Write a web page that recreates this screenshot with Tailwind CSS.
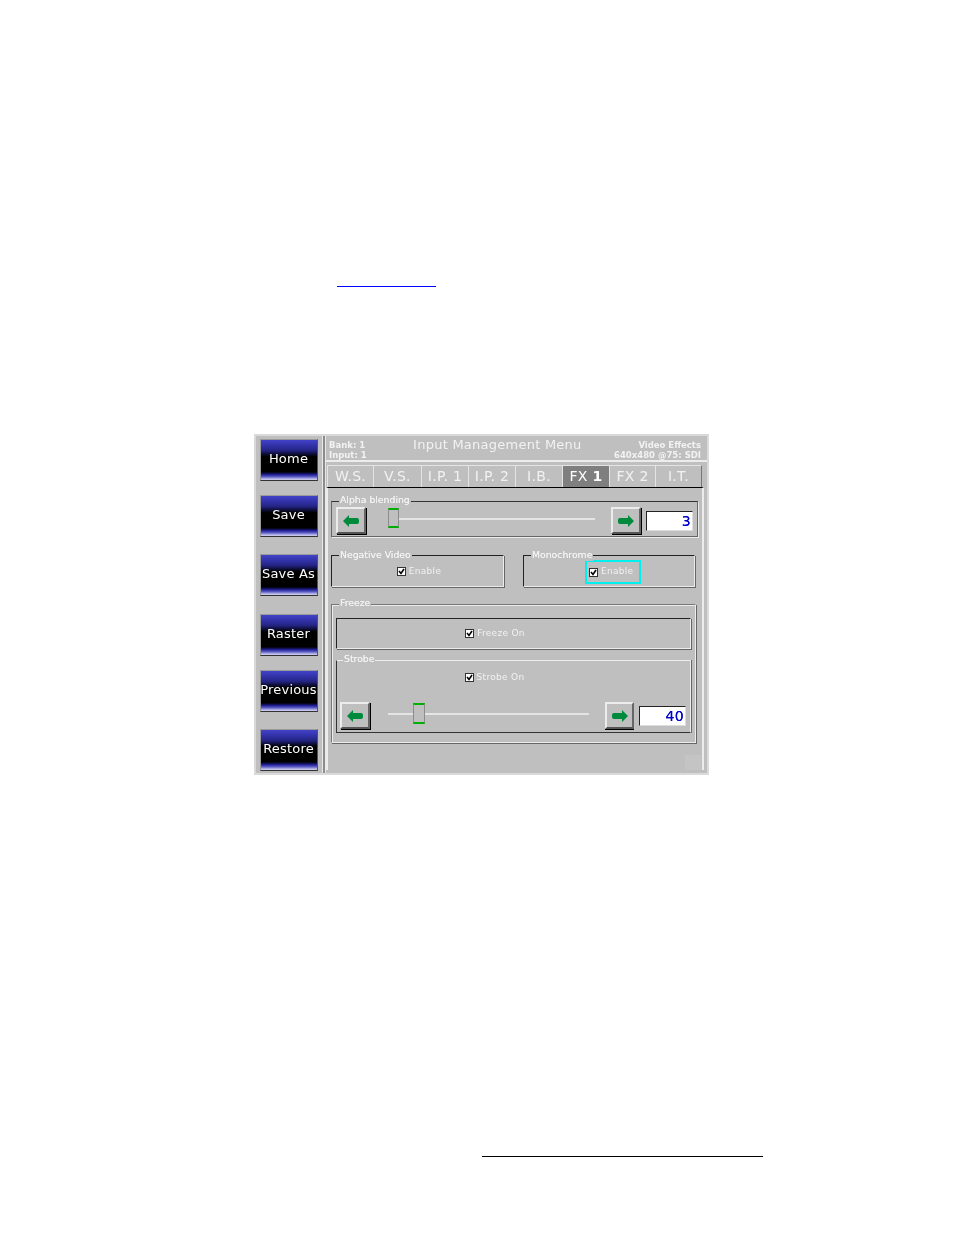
<!DOCTYPE html>
<html lang="en">

<head>
    <meta charset="UTF-8">
    <title>Input Management Menu</title>
    <script src="https://cdn.jsdelivr.net/npm/@tailwindcss/browser@4"></script>
</head>

<body class="bg-white">
    <div class="w-[954px] h-[1235px] overflow-hidden font-['DejaVu_Sans',sans-serif]">
        <!-- page link rule -->
        <div class="h-[286px]"></div>
        <div class="ml-[337px] w-[99px] h-px bg-[#0000ff]"></div>

        <!-- menu screenshot -->
        <div class="mt-[147px] ml-[254px] w-[455px] h-[341px] flex border-2 border-[#dadada] bg-[#bfbfbf] text-[#f2f2f2] blur-[0.3px]">

            <!-- left buttons -->
            <div class="w-[66px] pl-[4px] pt-[3px] text-white text-[13px] tracking-[0.2px]">
                <div class="w-[58px] h-[42px] pb-[2px] pr-[1px] flex items-center justify-center whitespace-nowrap border border-[#9a9a9a] border-r-[#555] border-b-[#333] bg-[linear-gradient(#4242c8_0%,#3232a8_14%,#242484_26%,#101040_34%,#000_42%,#000_80%,#1c1c90_86%,#5c5cc4_92%,#c4c4ec_98%)]">Home</div>
                <div class="mt-[14px] w-[58px] h-[42px] pb-[2px] pr-[1px] flex items-center justify-center whitespace-nowrap border border-[#9a9a9a] border-r-[#555] border-b-[#333] bg-[linear-gradient(#4242c8_0%,#3232a8_14%,#242484_26%,#101040_34%,#000_42%,#000_80%,#1c1c90_86%,#5c5cc4_92%,#c4c4ec_98%)]">Save</div>
                <div class="mt-[17px] w-[58px] h-[42px] pb-[2px] pr-[1px] flex items-center justify-center whitespace-nowrap border border-[#9a9a9a] border-r-[#555] border-b-[#333] bg-[linear-gradient(#4242c8_0%,#3232a8_14%,#242484_26%,#101040_34%,#000_42%,#000_80%,#1c1c90_86%,#5c5cc4_92%,#c4c4ec_98%)]">Save As</div>
                <div class="mt-[18px] w-[58px] h-[42px] pb-[2px] pr-[1px] flex items-center justify-center whitespace-nowrap border border-[#9a9a9a] border-r-[#555] border-b-[#333] bg-[linear-gradient(#4242c8_0%,#3232a8_14%,#242484_26%,#101040_34%,#000_42%,#000_80%,#1c1c90_86%,#5c5cc4_92%,#c4c4ec_98%)]">Raster</div>
                <div class="mt-[14px] w-[58px] h-[42px] pb-[2px] pr-[1px] flex items-center justify-center whitespace-nowrap border border-[#9a9a9a] border-r-[#555] border-b-[#333] bg-[linear-gradient(#4242c8_0%,#3232a8_14%,#242484_26%,#101040_34%,#000_42%,#000_80%,#1c1c90_86%,#5c5cc4_92%,#c4c4ec_98%)]">Previous</div>
                <div class="mt-[17px] w-[58px] h-[42px] pb-[2px] pr-[1px] flex items-center justify-center whitespace-nowrap border border-[#9a9a9a] border-r-[#555] border-b-[#333] bg-[linear-gradient(#4242c8_0%,#3232a8_14%,#242484_26%,#101040_34%,#000_42%,#000_80%,#1c1c90_86%,#5c5cc4_92%,#c4c4ec_98%)]">Restore</div>
            </div>

            <!-- right side -->
            <div class="w-[385px] h-[337px] border-l border-[#e8e8e8] shadow-[inset_2px_0_0_#8c8c8c,inset_3px_0_0_#e8e8e8]">
                <!-- header -->
                <div class="relative ml-[3px] h-[26px] flex justify-between pl-[3px] pr-[6px] border-b-2 border-[#ececec] text-[8.5px] leading-[10px] font-bold">
                    <div class="pt-[4px]">
                        <div>Bank: 1</div>
                        <div>Input: 1</div>
                    </div>
                    <div class="ml-[14px] pt-[1px] text-[13px] leading-[16px] font-normal tracking-[0.25px]">Input Management Menu</div>
                    <div class="pt-[4px] text-right">
                        <div>Video Effects</div>
                        <div>640x480 @75: SDI</div>
                    </div>
                </div>

                <!-- tabs -->
                <div class="mt-[3px] ml-[4px] flex h-[22px] text-[14px] text-center leading-[21px] tracking-[0.3px]">
                    <div class="w-[46px] border-l border-t border-[#e4e4e4]">W.S.</div>
                    <div class="w-[48px] border-l border-t border-[#e4e4e4]">V.S.</div>
                    <div class="w-[47px] border-l border-t border-[#e4e4e4]">I.P. 1</div>
                    <div class="w-[47px] border-l border-t border-[#e4e4e4]">I.P. 2</div>
                    <div class="w-[47px] border-l border-t border-[#e4e4e4]">I.B.</div>
                    <div class="w-[47px] border-l border-t border-[#e4e4e4] bg-[#7f7f7f] text-white">FX <b>1</b></div>
                    <div class="w-[46px] border-l border-t border-[#e4e4e4]">FX 2</div>
                    <div class="w-[47px] border-l border-t border-[#e4e4e4] border-r border-r-[#777]">I.T.</div>
                </div>

                <!-- tab body -->
                <div class="relative ml-[3px] w-[378px] h-[283px] border-t border-t-black border-l-2 border-r-2 border-l-[#ececec] border-r-[#ececec] pl-[3px] pt-[13px] text-[9px] tracking-[0.3px]">

                    <!-- alpha blending -->
                    <div class="relative w-[367px] h-[36px] border border-[#333] border-l-[#666] border-b-[#666] border-r-[#666] shadow-[1px_1px_0_#ececec] pl-[4px] pt-[5px] flex">
                        <span class="absolute left-[7px] top-[-8px] px-[1px] bg-[#bfbfbf] text-[9.3px] tracking-normal leading-[12px] [text-shadow:0_0_0.6px_#f2f2f2]">Alpha blending</span>
                        <div class="w-[30px] h-[27px] flex items-center justify-center border-2 border-[#ececec] border-r-[#666] border-b-[#555] shadow-[1px_1px_0_#000]">
                            <svg width="16" height="12" viewBox="0 0 16 12"><path d="M0 6 6 0V3H14Q16 3 16 5V7Q16 9 14 9H6V12Z" fill="#008a3c" /></svg>
                        </div>
                        <div class="relative ml-[22px] w-[207px] h-[25px]">
                            <div class="mt-[11px] h-[2px] bg-[#e4e4e4]"></div>
                            <div class="absolute left-0 top-[1px] w-[11px] h-[20px] bg-[#bfbfbf] border-x border-[#8c8c8c] border-y-2 border-y-[#00b000]"></div>
                        </div>
                        <div class="ml-[16px] w-[30px] h-[27px] flex items-center justify-center border-2 border-[#ececec] border-r-[#666] border-b-[#555] shadow-[1px_1px_0_#000]">
                            <svg width="16" height="12" viewBox="0 0 16 12"><path d="M16 6 10 0V3H2Q0 3 0 5V7Q0 9 2 9H10V12Z" fill="#008a3c" /></svg>
                        </div>
                        <div class="ml-[5px] mt-[4px] w-[47px] h-[20px] bg-white border border-[#222] border-r-[#ddd] border-b-[#ddd] text-right pr-[1px] text-[14px] leading-[18px] text-[#0000d0] [text-shadow:0_0_0.5px_#0000d0]">3</div>
                    </div>

                    <!-- enable groups -->
                    <div class="mt-[18px] flex">
                        <div class="relative w-[173px] h-[32px] pt-[1px] pl-[3px] border border-[#222] border-r-[#ececec] border-b-[#ececec] shadow-[1px_1px_0_#666] flex items-center justify-center gap-[3px]">
                            <span class="absolute left-[7px] top-[-7px] px-[1px] bg-[#bfbfbf] text-[9.3px] tracking-normal leading-[12px] [text-shadow:0_0_0.6px_#f2f2f2]">Negative Video</span>
                            <svg width="9" height="9" viewBox="0 0 9 9"><rect x=".5" y=".5" width="8" height="8" fill="#fff" stroke="#333" /><path d="M2 4 4 6.5 7 2" fill="none" stroke="#000" stroke-width="1.6" /></svg>
                            <span>Enable</span>
                        </div>
                        <div class="relative ml-[19px] w-[172px] h-[32px] border border-[#222] border-r-[#ececec] border-b-[#ececec] shadow-[1px_1px_0_#666] pl-[61px] pt-[4px]">
                            <span class="absolute left-[7px] top-[-7px] px-[1px] bg-[#bfbfbf] text-[9.3px] tracking-normal leading-[12px] [text-shadow:0_0_0.6px_#f2f2f2]">Monochrome</span>
                            <div class="w-[56px] h-[24px] border-2 border-[#00f0f0] flex items-center pl-[2px] gap-[3px]">
                                <svg width="9" height="9" viewBox="0 0 9 9"><rect x=".5" y=".5" width="8" height="8" fill="#fff" stroke="#333" /><path d="M2 4 4 6.5 7 2" fill="none" stroke="#000" stroke-width="1.6" /></svg>
                                <span>Enable</span>
                            </div>
                        </div>
                    </div>

                    <!-- freeze / strobe -->
                    <div class="relative mt-[17px] w-[365px] h-[139px] border border-[#ececec] border-l-[#777] border-t-[#777] shadow-[1px_1px_0_#666,inset_1px_1px_0_#ececec] pl-[4px] pt-[13px]">
                        <span class="absolute left-[7px] top-[-8px] px-[1px] bg-[#bfbfbf] text-[9.3px] tracking-normal leading-[12px] [text-shadow:0_0_0.6px_#f2f2f2]">Freeze</span>
                        <div class="w-[355px] h-[31px] border border-[#222] border-r-[#ececec] border-b-[#ececec] shadow-[1px_1px_0_#666] flex items-center justify-center gap-[3px] pr-[37px]">
                            <svg width="9" height="9" viewBox="0 0 9 9"><rect x=".5" y=".5" width="8" height="8" fill="#fff" stroke="#333" /><path d="M2 4 4 6.5 7 2" fill="none" stroke="#000" stroke-width="1.6" /></svg>
                            <span>Freeze On</span>
                        </div>
                        <div class="relative mt-[11px] w-[355px] h-[73px] border border-[#ececec] border-l-[#333] border-b-[#333] shadow-[1px_0_0_#666] pl-[3px]">
                            <span class="absolute left-[6px] top-[-8px] px-[1px] bg-[#bfbfbf] text-[9.3px] tracking-normal leading-[12px] [text-shadow:0_0_0.6px_#f2f2f2]">Strobe</span>
                            <div class="h-[41px] pt-[10px] flex justify-center gap-[3px] leading-[12px] pr-[41px]">
                                <svg class="mt-[2px]" width="9" height="9" viewBox="0 0 9 9"><rect x=".5" y=".5" width="8" height="8" fill="#fff" stroke="#333" /><path d="M2 4 4 6.5 7 2" fill="none" stroke="#000" stroke-width="1.6" /></svg>
                                <span>Strobe On</span>
                            </div>
                            <div class="flex">
                                <div class="w-[30px] h-[27px] flex items-center justify-center border-2 border-[#ececec] border-r-[#666] border-b-[#555] shadow-[1px_1px_0_#000]">
                                    <svg width="16" height="12" viewBox="0 0 16 12"><path d="M0 6 6 0V3H14Q16 3 16 5V7Q16 9 14 9H6V12Z" fill="#008a3c" /></svg>
                                </div>
                                <div class="relative ml-[18px] w-[201px] h-[25px]">
                                    <div class="mt-[11px] h-[2px] bg-[#e4e4e4]"></div>
                                    <div class="absolute left-[25px] top-[1px] w-[12px] h-[21px] bg-[#bfbfbf] border-x border-[#8c8c8c] border-y-2 border-y-[#00b000]"></div>
                                </div>
                                <div class="ml-[16px] w-[29px] h-[27px] flex items-center justify-center border-2 border-[#ececec] border-r-[#666] border-b-[#555] shadow-[0_1px_0_#000]">
                                    <svg width="16" height="12" viewBox="0 0 16 12"><path d="M16 6 10 0V3H2Q0 3 0 5V7Q0 9 2 9H10V12Z" fill="#008a3c" /></svg>
                                </div>
                                <div class="ml-[5px] mt-[4px] w-[47px] h-[20px] bg-white border border-[#222] border-r-[#ddd] border-b-[#ddd] text-right pr-[1px] text-[14px] leading-[18px] text-[#0000d0] [text-shadow:0_0_0.5px_#0000d0]">40</div>
                            </div>
                        </div>
                    </div>

                    <!-- faint patch lower right -->
                    <div class="absolute right-[1px] bottom-0 w-[16px] h-[15px] bg-[#c4c4c4]"></div>
                </div>
            </div>
        </div>

        <!-- footer rule -->
        <div class="mt-[381px] ml-[482px] w-[281px] h-px bg-black"></div>
    </div>
</body>

</html>
